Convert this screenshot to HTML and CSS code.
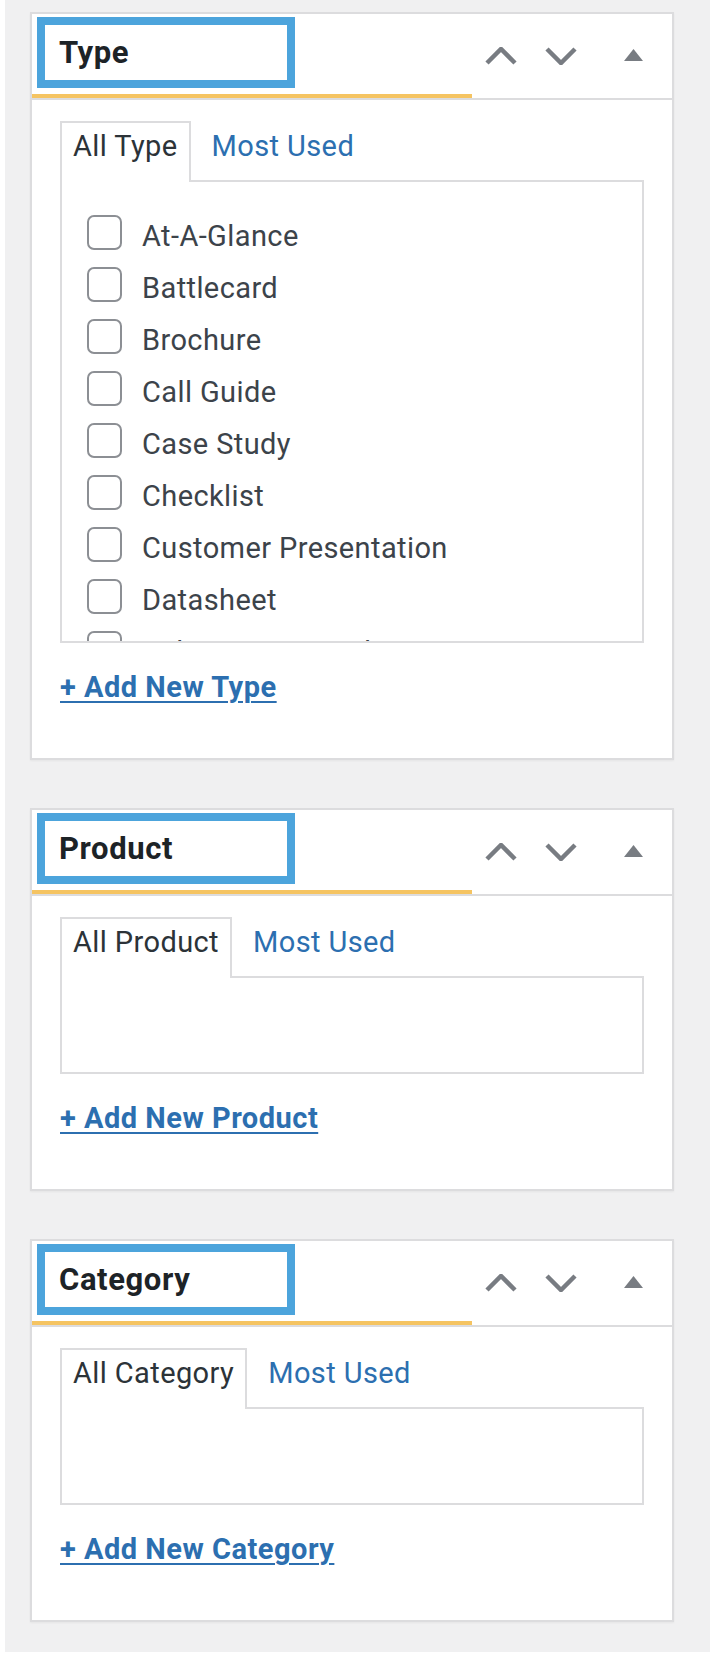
FILE: index.html
```html
<!DOCTYPE html>
<html lang="en">
<head>
    <meta charset="UTF-8">
    <meta name="viewport" content="width=device-width, initial-scale=1.0">
    <title>Taxonomy Boxes</title>
    <link rel="stylesheet" href="styles.css">
</head>
<body>

    <div class="sidebar">

        <!-- Type box -->
        <div class="postbox">
            <div class="postbox-header">
                <div class="title-wrap">
                    <h2 class="hndle">Type</h2>
                </div>
                <div class="handle-actions">
                    <svg class="icon-up" width="32" height="18" viewBox="0 0 32 18"><polyline points="2,16 16,2 30,16"/></svg>
                    <svg class="icon-down" width="32" height="18" viewBox="0 0 32 18"><polyline points="2,2 16,16 30,2"/></svg>
                    <svg class="icon-toggle" width="19" height="12" viewBox="0 0 19 12"><polygon points="9.5,0 19,12 0,12"/></svg>
                </div>
            </div>
            <div class="inside">
                <ul class="tabs">
                    <li class="tab active">All Type</li>
                    <li class="tab"><a href="#">Most Used</a></li>
                </ul>
                <div class="tabs-panel tall">
                    <ul class="checklist">
                        <li><input type="checkbox"><span>At-A-Glance</span></li>
                        <li><input type="checkbox"><span>Battlecard</span></li>
                        <li><input type="checkbox"><span>Brochure</span></li>
                        <li><input type="checkbox"><span>Call Guide</span></li>
                        <li><input type="checkbox"><span>Case Study</span></li>
                        <li><input type="checkbox"><span>Checklist</span></li>
                        <li><input type="checkbox"><span>Customer Presentation</span></li>
                        <li><input type="checkbox"><span>Datasheet</span></li>
                        <li><input type="checkbox"><span>Industry Research/Report</span></li>
                    </ul>
                </div>
                <a class="add-new" href="#">+ Add New Type</a>
            </div>
        </div>

        <!-- Product box -->
        <div class="postbox">
            <div class="postbox-header">
                <div class="title-wrap">
                    <h2 class="hndle">Product</h2>
                </div>
                <div class="handle-actions">
                    <svg class="icon-up" width="32" height="18" viewBox="0 0 32 18"><polyline points="2,16 16,2 30,16"/></svg>
                    <svg class="icon-down" width="32" height="18" viewBox="0 0 32 18"><polyline points="2,2 16,16 30,2"/></svg>
                    <svg class="icon-toggle" width="19" height="12" viewBox="0 0 19 12"><polygon points="9.5,0 19,12 0,12"/></svg>
                </div>
            </div>
            <div class="inside">
                <ul class="tabs">
                    <li class="tab active">All Product</li>
                    <li class="tab"><a href="#">Most Used</a></li>
                </ul>
                <div class="tabs-panel"></div>
                <a class="add-new" href="#">+ Add New Product</a>
            </div>
        </div>

        <!-- Category box -->
        <div class="postbox">
            <div class="postbox-header">
                <div class="title-wrap">
                    <h2 class="hndle">Category</h2>
                </div>
                <div class="handle-actions">
                    <svg class="icon-up" width="32" height="18" viewBox="0 0 32 18"><polyline points="2,16 16,2 30,16"/></svg>
                    <svg class="icon-down" width="32" height="18" viewBox="0 0 32 18"><polyline points="2,2 16,16 30,2"/></svg>
                    <svg class="icon-toggle" width="19" height="12" viewBox="0 0 19 12"><polygon points="9.5,0 19,12 0,12"/></svg>
                </div>
            </div>
            <div class="inside">
                <ul class="tabs">
                    <li class="tab active">All Category</li>
                    <li class="tab"><a href="#">Most Used</a></li>
                </ul>
                <div class="tabs-panel"></div>
                <a class="add-new" href="#">+ Add New Category</a>
            </div>
        </div>

    </div>

</body>
</html>
```

FILE: styles.css
```css
/* Page */
body {
    margin: 0;
    background: #fff;
    font-family: Roboto, "Liberation Sans", sans-serif;
}
.sidebar {
    margin-left: 5px;
    background: #f0f0f1;
    padding: 12px 36px 30px 25px;
}

/* Boxes */
.postbox {
    background: #fff;
    border: 2px solid #dcdcde;
    box-shadow: 0 1px 2px rgba(0, 0, 0, 0.05);
}
.postbox + .postbox {
    margin-top: 48px;
}
.postbox-header {
    display: flex;
    border-bottom: 2px solid #dcdcde;
}
.title-wrap {
    width: 440px;
    height: 80px;
    border-bottom: 4px solid #f5c462;
}
.hndle {
    box-sizing: border-box;
    display: flex;
    align-items: center;
    width: 258px;
    height: 71px;
    margin: 3px 0 0 5px;
    padding-left: 14px;
    border: 8px solid #4ca4dc;
    font-size: 31px;
    letter-spacing: 0.6px;
    font-weight: 700;
    color: #1d2327;
}

/* Move / toggle buttons */
.handle-actions {
    flex: 1;
    display: flex;
    align-items: center;
    padding-left: 13px;
}
.handle-actions polyline {
    fill: none;
    stroke: #787c82;
    stroke-width: 4.5;
}
.handle-actions polygon {
    fill: #787c82;
}
.icon-down {
    margin-left: 28px;
}
.icon-toggle {
    margin-left: 47px;
    margin-bottom: 3px;
}

/* Content */
.inside {
    padding: 21px 28px 54px 28px;
}
.tabs {
    display: flex;
    margin: 0;
    padding: 0;
    list-style: none;
}
.tab {
    position: relative;
    margin-bottom: -2px;
    padding: 7px 11px 19px 19px;
    border: 2px solid transparent;
    border-bottom: none;
    font-size: 29px;
    letter-spacing: 0.4px;
    line-height: 33px;
    color: #2c3338;
}
.tab.active {
    padding-left: 11px;
    background: #fff;
    border-color: #dcdcde;
}
.tab a {
    color: #2c6fb0;
    text-decoration: none;
}
.tabs-panel {
    height: 94px;
    border: 2px solid #dcdcde;
    overflow: hidden;
}
.tabs-panel.tall {
    height: 459px;
}

/* Checkbox list */
.checklist {
    margin: 0;
    padding: 26px 0 0 25px;
    list-style: none;
}
.checklist li {
    display: flex;
    align-items: center;
    height: 52px;
    font-size: 29px;
    letter-spacing: 0.4px;
    color: #3c434a;
}
.checklist input {
    appearance: none;
    -webkit-appearance: none;
    box-sizing: border-box;
    width: 35px;
    height: 35px;
    margin: 0 20px 4px 0;
    border: 2px solid #8c8f94;
    border-radius: 7px;
    background: #fff;
}
.checklist span {
    margin-top: 4px;
}

/* Add new link */
.add-new {
    display: inline-block;
    margin-top: 28px;
    font-size: 29px;
    letter-spacing: 0.5px;
    line-height: 33px;
    font-weight: 700;
    color: #2c6fb0;
    text-decoration: underline;
    text-decoration-thickness: 2px;
    text-underline-offset: 4px;
}
```
